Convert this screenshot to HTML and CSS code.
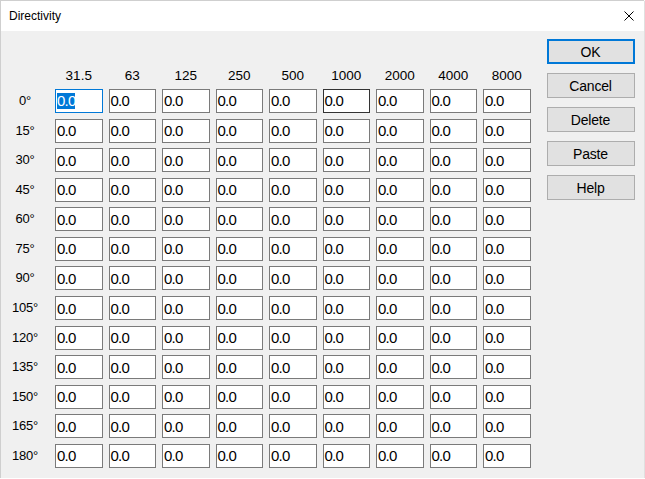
FILE: index.html
```html
<!DOCTYPE html>
<html lang="en">
<head>
    <meta charset="UTF-8">
    <meta name="viewport" content="width=device-width, initial-scale=1.0">
    <title>Directivity</title>
    <link rel="stylesheet" href="styles.css">
</head>
<body>
    <div class="window">
        <div class="titlebar">
            <span class="title">Directivity</span>
            <span class="close">
                <svg width="10" height="10" viewBox="0 0 10 10">
                    <path d="M0.5 0.5 L9.5 9.5 M9.5 0.5 L0.5 9.5" stroke="#000" stroke-width="1" fill="none"/>
                </svg>
            </span>
        </div>
        <div class="content">
            <div id="table" class="table">
                <!-- Header and rows are filled in below -->
            </div>
            <div class="buttons">
                <button class="btn default">OK</button>
                <button class="btn">Cancel</button>
                <button class="btn">Delete</button>
                <button class="btn">Paste</button>
                <button class="btn">Help</button>
            </div>
        </div>
    </div>

    <script>
        // Octave band centre frequencies
        const bands = ['31.5', '63', '125', '250', '500', '1000', '2000', '4000', '8000'];

        // Angles 0..180 in 15 degree steps
        const angles = [];
        for (let a = 0; a <= 180; a += 15) {
            angles.push(a);
        }

        function buildTable() {
            const table = document.getElementById('table');

            // Top left corner is empty
            table.appendChild(document.createElement('div'));

            bands.forEach(band => {
                const head = document.createElement('div');
                head.classList.add('band');
                head.textContent = band;
                table.appendChild(head);
            });

            angles.forEach((angle, row) => {
                const label = document.createElement('div');
                label.classList.add('angle');
                label.textContent = angle + '°';
                table.appendChild(label);

                bands.forEach((band, col) => {
                    const field = document.createElement('div');
                    field.classList.add('field');
                    const value = document.createElement('span');
                    value.textContent = '0.0';
                    field.appendChild(value);

                    if (row === 0 && col === 0) {
                        field.classList.add('focused'); // caret starts here, text selected
                    }
                    if (row === 0 && col === 5) {
                        field.classList.add('hover');
                    }
                    table.appendChild(field);
                });
            });
        }

        buildTable();
    </script>
</body>
</html>
```

FILE: styles.css
```css
body {
    margin: 0;
    background-color: #ffffff;
    font-family: "Liberation Sans", Arial, sans-serif;
    font-size: 13px;
    color: #000;
}

.window {
    width: 643px;
    height: 477px;
    border: 1px solid #cfcfcf;
    border-right: none;
    border-bottom: none;
    background-color: #f0f0f0;
    box-shadow: 1px 1px 1px rgba(0, 0, 0, 0.12);
    display: flex;
    flex-direction: column;
}

.titlebar {
    height: 30px;
    background-color: #ffffff;
    display: flex;
    align-items: center;
    justify-content: space-between;
}

.title {
    font-size: 12px;
    padding-left: 8px;
    padding-bottom: 1px;
}

.close {
    width: 10px;
    height: 10px;
    margin-right: 10px;
    display: flex;
}

.content {
    display: flex;
    align-items: flex-start;
}

.table {
    display: grid;
    grid-template-columns: 48px repeat(9, 47.5px);
    grid-template-rows: 15px;
    grid-auto-rows: 24px;
    column-gap: 6px;
    row-gap: 5.58px;
    padding-top: 37.4px;
}

.band {
    text-align: center;
    line-height: 15px;
    font-size: 13.5px;
}

.angle {
    display: flex;
    align-items: center;
    justify-content: center;
    padding-bottom: 1px;
    font-size: 13px;
    letter-spacing: -0.2px;
}

.field {
    box-sizing: border-box;
    border: 1px solid #7a7a7a;
    background-color: #ffffff;
    display: flex;
    align-items: center;
    padding-left: 1px;
    font-size: 15px;
    letter-spacing: -0.8px;
}

.field.focused {
    border-color: #0078d7;
}

.field.focused span {
    background-color: #0078d7;
    color: #ffffff;
    line-height: 16px;
}

.field.hover {
    border-color: #333333;
}

.buttons {
    display: flex;
    flex-direction: column;
    gap: 9px;
    margin-left: 16px;
    padding-top: 8px;
}

.btn {
    box-sizing: border-box;
    width: 88px;
    height: 25px;
    margin: 0;
    padding: 0;
    font-family: "Liberation Sans", Arial, sans-serif;
    font-size: 14px;
    letter-spacing: -0.2px;
    color: #000;
    background-color: #e1e1e1;
    border: 1px solid #adadad;
    border-radius: 0;
}

.btn.default {
    border: 2px solid #0078d7;
}
```
